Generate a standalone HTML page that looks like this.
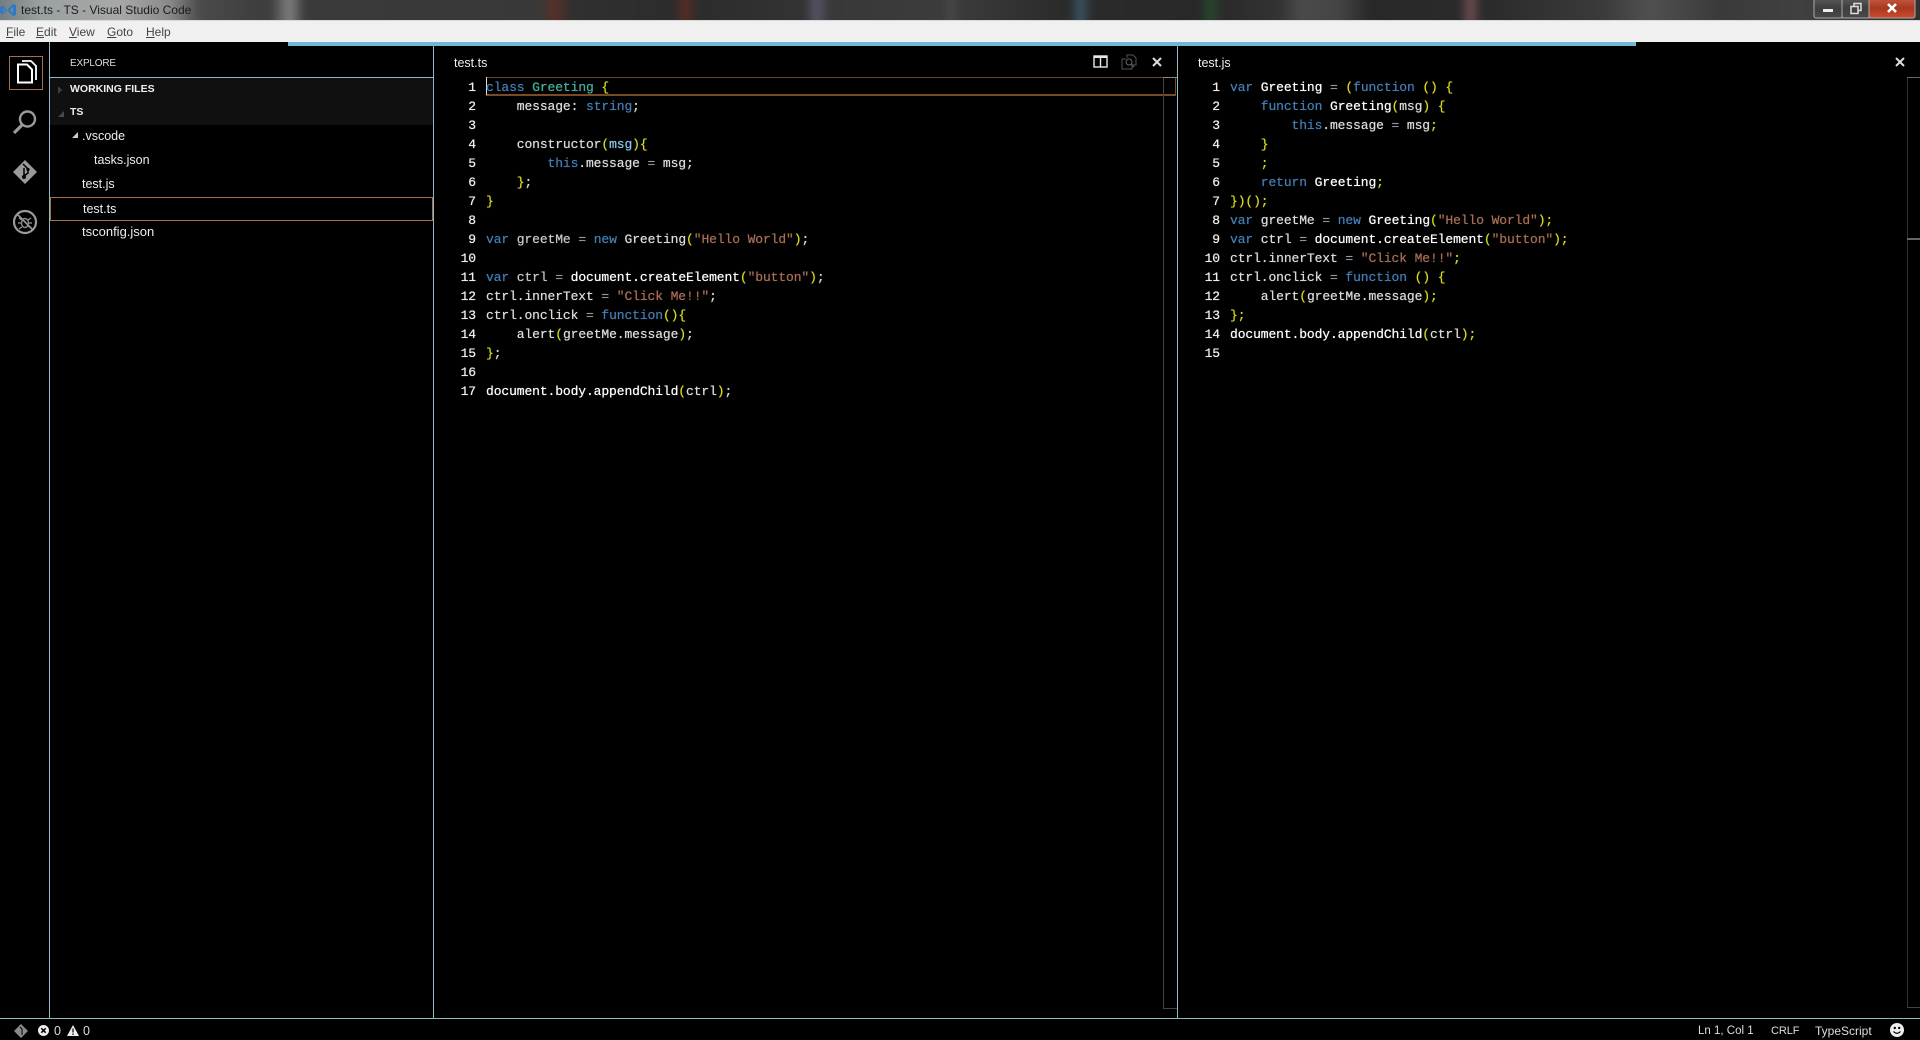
<!DOCTYPE html>
<html><head><meta charset="utf-8"><title>test.ts - TS - Visual Studio Code</title>
<style>
html,body{margin:0;padding:0;width:1920px;height:1040px;overflow:hidden;background:#000;}
body{position:relative;font-family:"Liberation Sans",sans-serif;font-size:13px;color:#eee;}
.a{position:absolute;}
.t{position:absolute;white-space:pre;line-height:19px;}
.ln{position:absolute;width:40px;text-align:right;font:13px/19px "Liberation Mono",monospace;letter-spacing:-.11px;color:#f0f0f0;white-space:pre;text-shadow:0 0 .6px #fff;}
.code{position:absolute;font:13px/19px "Liberation Mono",monospace;letter-spacing:-.11px;color:#dcdcdc;white-space:pre;margin:0;text-shadow:0 0 .6px currentColor;}
.k{color:#437db4}.g{color:#44b09c}.s{color:#a86e55}.y{color:#d8d820}.p{color:#8cc6e4}.o{color:#8a9aa8}.d{color:#c8c8c8}
.b{color:#fff}
.m span{text-decoration:underline;}
</style></head><body>
<div class="a" style="left:0;top:0;width:1920px;height:20px;overflow:hidden;background:#333;">
<div class="a" style="left:-10px;top:-10px;width:1940px;height:40px;filter:blur(4px);background:linear-gradient(90deg,#6a7478 0,#9aa0a0 50px,#a8a8a8 130px,#8a8a8a 180px,#4a4a4a 210px,#3c3c3c 280px,#808080 300px,#3a3a3a 315px,#383838 550px,#5a3026 565px,#303030 580px,#2c2c2c 685px,#5a2c24 695px,#2c2c2c 708px,#333 815px,#5a5468 826px,#383838 840px,#3c3c3c 955px,#4a4a4a 960px,#3a3a3a 970px,#2a2a2a 1080px,#3a5666 1090px,#2a2a2a 1102px,#282828 1210px,#244a2c 1220px,#2a2a2a 1232px,#333 1290px,#4a4a4a 1310px,#444 1350px,#282828 1380px,#2a2a2a 1470px,#705054 1480px,#2a2a2a 1492px,#3a3a3a 1610px,#505050 1660px,#3a3a3a 1730px,#404040 1810px,#303030 1940px);"></div></div>
<div class="a" style="left:0;top:20px;width:1920px;height:1px;background:#d8d8d8;"></div>
<svg class="a" style="left:0;top:1px" width="17" height="18" viewBox="0 0 17 18"><path d="M0 6l3-1 4 4 6-6 3 1v10l-3 1-6-6-4 4-3-1zM3 7v4l2-2zM13 6l-3 3 3 3z" fill="#2a7bc8" fill-rule="evenodd"/></svg>
<div class="t" style="left:21px;top:1px;color:#1c1c1c;font-size:12px;">test.ts - TS - Visual Studio Code</div>
<svg class="a" style="left:1812px;top:0" width="108" height="20"><defs><linearGradient id="r" x1="0" y1="0" x2="0" y2="1"><stop offset="0" stop-color="#c85a40"/><stop offset=".5" stop-color="#a83820"/><stop offset="1" stop-color="#d04a2c"/></linearGradient><linearGradient id="n" x1="0" y1="0" x2="0" y2="1"><stop offset="0" stop-color="#5a5a5a"/><stop offset=".5" stop-color="#3e3e3e"/><stop offset="1" stop-color="#484848"/></linearGradient></defs><rect x="2" y="-2" width="28" height="20" rx="2" fill="url(#n)" stroke="#aaa"/><rect x="30" y="-2" width="27" height="20" fill="url(#n)" stroke="#aaa"/><rect x="57" y="-2" width="46" height="20" rx="2" fill="url(#r)" stroke="#aaa"/><rect x="11" y="9" width="10" height="3" fill="#eee"/><path d="M39 6.500h7v7h-7zM42 6.500v-3h7v7h-3" fill="none" stroke="#ddd" stroke-width="1.500"/><path d="M76 4l8 8M84 4l-8 8" stroke="#fff" stroke-width="2.600"/></svg>
<div class="a" style="left:0;top:21px;width:1920px;height:21px;background:#f0f0f0;"></div>
<div class="a m" style="left:0;top:21px;height:21px;color:#444;font-size:12px;line-height:22px;">
<div class="t" style="left:6px;line-height:22px"><span>F</span>ile</div><div class="t" style="left:36px;line-height:22px"><span>E</span>dit</div><div class="t" style="left:69px;line-height:22px"><span>V</span>iew</div><div class="t" style="left:107px;line-height:22px"><span>G</span>oto</div><div class="t" style="left:146px;line-height:22px"><span>H</span>elp</div></div>
<div class="a" style="left:288px;top:42px;width:1348px;height:4px;background:#6fb9d6;"></div>

<div class="a" style="left:49px;top:42px;width:1px;height:976px;background:#8fb8c4;"></div>
<div class="a" style="left:433px;top:46px;width:1px;height:972px;background:#8fb8c4;"></div>
<div class="a" style="left:1177px;top:46px;width:1px;height:972px;background:#8fb8c4;"></div>
<div class="a" style="left:0;top:1018px;width:1920px;height:1px;background:#8fb8c4;"></div>

<div class="a" style="left:9px;top:56px;width:32px;height:32px;border:1px solid #a5714a;"></div>
<svg class="a" style="left:15px;top:58px" width="24" height="28" viewBox="0 0 24 28"><path d="M3 6.500h9l5 5v13h-14z" fill="none" stroke="#fff" stroke-width="2"/><path d="M7 3h9l5 5v14" fill="none" stroke="#fff" stroke-width="1.800"/></svg>
<svg class="a" style="left:12px;top:109px" width="26" height="26" viewBox="0 0 26 26"><circle cx="15.500" cy="10" r="7.500" fill="none" stroke="#9a9a9a" stroke-width="2.400"/><path d="M10 16l-8 8" stroke="#9a9a9a" stroke-width="3.200"/></svg>
<svg class="a" style="left:12px;top:159px" width="26" height="26" viewBox="0 0 26 26"><path d="M13 1l12 12-12 12-12-12z" fill="#9a9a9a"/><path d="M11 5l5 5M12 9v10M16 10v4l-4 3" stroke="#000" stroke-width="1.500" fill="none"/><circle cx="12" cy="18" r="2" fill="#000"/><circle cx="16" cy="10.500" r="1.600" fill="#000"/></svg>
<svg class="a" style="left:12px;top:209px" width="26" height="26" viewBox="0 0 26 26"><circle cx="13" cy="13" r="11" fill="none" stroke="#9a9a9a" stroke-width="2.200"/><path d="M5 5l16 16" stroke="#9a9a9a" stroke-width="1.600"/><ellipse cx="13" cy="14" rx="3.500" ry="4.500" fill="none" stroke="#8a8a8a" stroke-width="1.400"/><path d="M7 9l3 2M19 9l-3 2M6 14h3M20 14h-3M7 20l3-2M19 19l-3-2" stroke="#9a9a9a" stroke-width="1.200"/></svg>

<div class="t" style="left:70px;top:54px;font-size:10px;color:#ddd;letter-spacing:-.2px;">EXPLORE</div>
<div class="a" style="left:50px;top:77px;width:383px;height:1px;background:#8fb8c4;"></div>
<div class="a" style="left:50px;top:78px;width:383px;height:47px;background:#101010;"></div>
<div class="a" style="left:58px;top:86px;width:0;height:0;border-left:4px solid #3f3f3f;border-top:4px solid transparent;border-bottom:4px solid transparent;"></div>
<div class="t" style="left:70px;top:80px;font-size:10.500px;font-weight:bold;color:#eee;">WORKING FILES</div>
<div class="a" style="left:58px;top:111px;width:0;height:0;border-right:6px solid #4a4a4a;border-top:6px solid transparent;"></div>
<div class="t" style="left:70px;top:103px;font-size:10.500px;font-weight:bold;color:#eee;">TS</div>
<div class="a" style="left:72px;top:132px;width:0;height:0;border-right:6px solid #ccc;border-top:6px solid transparent;"></div>
<div class="t" style="left:82px;top:127px;font-size:12.500px;">.vscode</div>
<div class="t" style="left:94px;top:151px;font-size:12.500px;">tasks.json</div>
<div class="t" style="left:82px;top:175px;font-size:12.500px;">test.js</div>
<div class="a" style="left:50px;top:197px;width:381px;height:22px;border:1px solid #a5714a;"></div>
<div class="t" style="left:83px;top:200px;font-size:12.500px;">test.ts</div>
<div class="t" style="left:82px;top:222px;">tsconfig.json</div>

<div class="t" style="left:454px;top:54px;font-size:12.500px;">test.ts</div>
<svg class="a" style="left:1093px;top:55px" width="15" height="13"><rect x="1" y="1" width="13" height="11" fill="none" stroke="#e8e8e8" stroke-width="1.400"/><path d="M7.500 1v11" stroke="#e8e8e8" stroke-width="1.400"/><path d="M1 2h13" stroke="#e8e8e8" stroke-width="2"/></svg>
<svg class="a" style="left:1121px;top:54px" width="16" height="16"><path d="M5 5H1v10h10v-3M6 4V1h6l3 3v7h-4" fill="none" stroke="#555" stroke-width="1"/><circle cx="8" cy="8" r="3" fill="none" stroke="#666"/><path d="M10 10l3 3" stroke="#666" stroke-width="1.200"/></svg>
<svg class="a" style="left:1152px;top:57px" width="10" height="10"><path d="M1 1l8 8M9 1l-8 8" stroke="#ddd" stroke-width="2"/></svg>
<div class="a" style="left:486px;top:77px;width:690px;height:16px;border:solid #6a4528;border-width:1px 0;border-bottom-color:#7a4a22;border-bottom-width:2px;"></div>
<div class="a" style="left:486px;top:77px;width:1px;height:18px;background:#ddd;"></div>
<div class="a" style="left:1175px;top:77px;width:1px;height:18px;background:#7a4a22;"></div>
<div class="a" style="left:1163px;top:77px;width:1px;height:931px;background:#444;"></div>
<div class="a" style="left:1163px;top:77px;width:14px;height:1px;background:#888;"></div>
<div class="a" style="left:1163px;top:1008px;width:14px;height:1px;background:#444;"></div>

<div class="ln" style="left:436px;top:78px;">1
2
3
4
5
6
7
8
9
10
11
12
13
14
15
16
17</div>
<pre class="code" style="left:486px;top:78px;"><span class="k">class</span> <span class="g">Greeting</span> <span class="y">{</span>
    message: <span class="k">string</span>;
 
    constructor<span class="y">(</span><span class="p">msg</span><span class="y">){</span>
        <span class="k">this</span>.message <span class="o">=</span> msg;
    <span class="y">}</span>;
<span class="y">}</span>

<span class="k">var</span> <span class="d">greetMe</span> <span class="o">=</span> <span class="k">new</span> Greeting<span class="y">(</span><span class="s">"Hello World"</span><span class="y">)</span>;

<span class="k">var</span> <span class="d">ctrl</span> <span class="o">=</span> <span class="b">document.createElement</span><span class="y">(</span><span class="s">"button"</span><span class="y">)</span>;
ctrl.innerText <span class="o">=</span> <span class="s">"Click Me!!"</span>;
ctrl.onclick <span class="o">=</span> <span class="k">function</span><span class="y">(){</span>
    alert<span class="y">(</span>greetMe.message<span class="y">)</span>;
<span class="y">}</span>;

<span class="b">document.body.appendChild</span><span class="y">(</span>ctrl<span class="y">)</span>;</pre>

<div class="t" style="left:1198px;top:54px;font-size:12.500px;">test.js</div>
<svg class="a" style="left:1895px;top:57px" width="10" height="10"><path d="M1 1l8 8M9 1l-8 8" stroke="#ddd" stroke-width="2"/></svg>
<div class="a" style="left:1907px;top:77px;width:1px;height:930px;background:#333;"></div>
<div class="a" style="left:1907px;top:77px;width:13px;height:1px;background:#666;"></div>
<div class="a" style="left:1907px;top:238px;width:13px;height:2px;background:#666;"></div>
<div class="a" style="left:1907px;top:1007px;width:13px;height:1px;background:#444;"></div>

<div class="ln" style="left:1180px;top:78px;">1
2
3
4
5
6
7
8
9
10
11
12
13
14
15</div>
<pre class="code" style="left:1230px;top:78px;"><span class="k">var</span> <span class="b">Greeting</span> <span class="o">=</span> <span class="y">(</span><span class="k">function</span> <span class="y">() {</span>
    <span class="k">function</span> <span class="b">Greeting</span><span class="y">(</span>msg<span class="y">) {</span>
        <span class="k">this</span>.message <span class="o">=</span> msg<span class="y">;</span>
    <span class="y">}</span>
    <span class="y">;</span>
    <span class="k">return</span> <span class="b">Greeting</span><span class="y">;</span>
<span class="y">})();</span>
<span class="k">var</span> greetMe <span class="o">=</span> <span class="k">new</span> <span class="b">Greeting</span><span class="y">(</span><span class="s">"Hello World"</span><span class="y">);</span>
<span class="k">var</span> ctrl <span class="o">=</span> <span class="b">document.createElement</span><span class="y">(</span><span class="s">"button"</span><span class="y">);</span>
ctrl.innerText <span class="o">=</span> <span class="s">"Click Me!!"</span><span class="y">;</span>
ctrl.onclick <span class="o">=</span> <span class="k">function</span> <span class="y">() {</span>
    alert<span class="y">(</span>greetMe.message<span class="y">);</span>
<span class="y">};</span>
<span class="b">document.body.appendChild</span><span class="y">(</span>ctrl<span class="y">);</span></pre>

<svg class="a" style="left:14px;top:1024px" width="14" height="14"><path d="M7 0l7 7-7 7-7-7z" fill="#8a8a8a"/><path d="M6 3l2 2v6" stroke="#000" stroke-width="1" fill="none"/></svg>
<svg class="a" style="left:38px;top:1025px" width="11" height="11"><circle cx="5.500" cy="5.500" r="5.500" fill="#eee"/><path d="M3.300 3.300l4.400 4.400M7.700 3.300l-4.400 4.400" stroke="#000" stroke-width="1.500"/></svg>
<div class="t" style="left:54px;top:1022px;color:#ddd;font-size:12.500px;">0</div>
<svg class="a" style="left:67px;top:1025px" width="12" height="11"><path d="M6 0l6 11H0z" fill="#eee"/><path d="M6 3.500v4M6 8.500v1.500" stroke="#000" stroke-width="1.200"/></svg>
<div class="t" style="left:83px;top:1022px;color:#ddd;font-size:12.500px;">0</div>
<div class="t" style="left:1698px;top:1022px;font-size:11.500px;color:#ddd;">Ln 1, Col 1</div>
<div class="t" style="left:1771px;top:1022px;font-size:11px;color:#ddd;letter-spacing:-.1px;">CRLF</div>
<div class="t" style="left:1815px;top:1022px;font-size:12px;color:#ddd;">TypeScript</div>
<svg class="a" style="left:1890px;top:1023px" width="14" height="14"><circle cx="7" cy="7" r="7" fill="#eee"/><circle cx="4.800" cy="5" r="1.200" fill="#000"/><circle cx="9.200" cy="5" r="1.200" fill="#000"/><path d="M3.500 8.500q3.500 3.500 7 0" stroke="#000" stroke-width="1.200" fill="none"/></svg>
</body></html>
